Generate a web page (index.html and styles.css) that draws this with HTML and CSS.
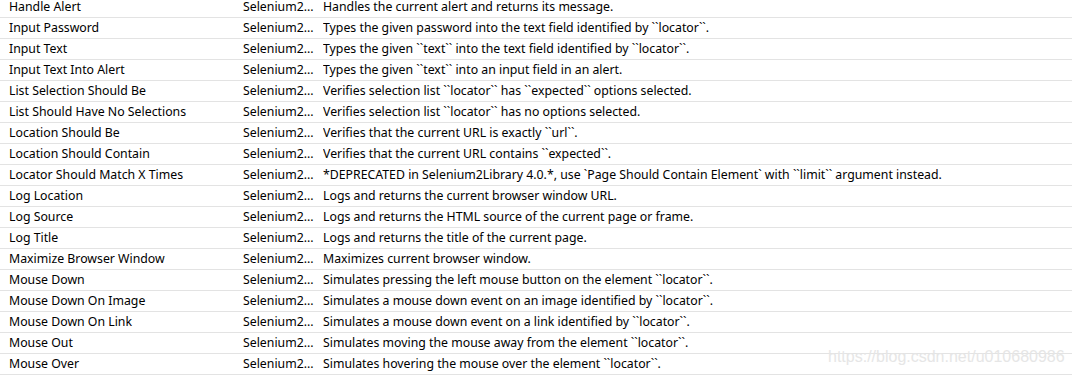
FILE: index.html
```html
<!DOCTYPE html>
<html>
<head>
<meta charset="utf-8">
<link rel="stylesheet" href="styles.css">
</head>
<body>
<div class="list">
  <div class="row"><span class="name">Handle Alert</span><span class="lib">Selenium2...</span><span class="doc">Handles the current alert and returns its message.</span></div>
  <div class="row"><span class="name">Input Password</span><span class="lib">Selenium2...</span><span class="doc">Types the given password into the text field identified by ``locator``.</span></div>
  <div class="row"><span class="name">Input Text</span><span class="lib">Selenium2...</span><span class="doc">Types the given ``text`` into the text field identified by ``locator``.</span></div>
  <div class="row"><span class="name">Input Text Into Alert</span><span class="lib">Selenium2...</span><span class="doc">Types the given ``text`` into an input field in an alert.</span></div>
  <div class="row"><span class="name">List Selection Should Be</span><span class="lib">Selenium2...</span><span class="doc">Verifies selection list ``locator`` has ``expected`` options selected.</span></div>
  <div class="row"><span class="name">List Should Have No Selections</span><span class="lib">Selenium2...</span><span class="doc">Verifies selection list ``locator`` has no options selected.</span></div>
  <div class="row"><span class="name">Location Should Be</span><span class="lib">Selenium2...</span><span class="doc">Verifies that the current URL is exactly ``url``.</span></div>
  <div class="row"><span class="name">Location Should Contain</span><span class="lib">Selenium2...</span><span class="doc">Verifies that the current URL contains ``expected``.</span></div>
  <div class="row"><span class="name">Locator Should Match X Times</span><span class="lib">Selenium2...</span><span class="doc">*DEPRECATED in Selenium2Library 4.0.*, use `Page Should Contain Element` with ``limit`` argument instead.</span></div>
  <div class="row"><span class="name">Log Location</span><span class="lib">Selenium2...</span><span class="doc">Logs and returns the current browser window URL.</span></div>
  <div class="row"><span class="name">Log Source</span><span class="lib">Selenium2...</span><span class="doc">Logs and returns the HTML source of the current page or frame.</span></div>
  <div class="row"><span class="name">Log Title</span><span class="lib">Selenium2...</span><span class="doc">Logs and returns the title of the current page.</span></div>
  <div class="row"><span class="name">Maximize Browser Window</span><span class="lib">Selenium2...</span><span class="doc">Maximizes current browser window.</span></div>
  <div class="row"><span class="name">Mouse Down</span><span class="lib">Selenium2...</span><span class="doc">Simulates pressing the left mouse button on the element ``locator``.</span></div>
  <div class="row"><span class="name">Mouse Down On Image</span><span class="lib">Selenium2...</span><span class="doc">Simulates a mouse down event on an image identified by ``locator``.</span></div>
  <div class="row"><span class="name">Mouse Down On Link</span><span class="lib">Selenium2...</span><span class="doc">Simulates a mouse down event on a link identified by ``locator``.</span></div>
  <div class="row"><span class="name">Mouse Out</span><span class="lib">Selenium2...</span><span class="doc">Simulates moving the mouse away from the element ``locator``.</span></div>
  <div class="row"><span class="name">Mouse Over</span><span class="lib">Selenium2...</span><span class="doc">Simulates hovering the mouse over the element ``locator``.</span></div>
</div>
<div class="watermark">https://blog.csdn.net/u010680986</div>
</body>
</html>
```
FILE: styles.css
```css
html, body {
  margin: 0;
  padding: 0;
  background: #ffffff;
  overflow: hidden;
}
body {
  position: relative;
  width: 1072px;
  height: 375px;
  font-family: "Noto Sans", "Noto Sans CJK SC", sans-serif;
  font-size: 12.3px;
  color: #000000;
}
.list {
  margin-top: -3px;
}
.row {
  display: grid;
  grid-template-columns: 243px 80px 1fr;
  height: 20px;
  line-height: 20px;
  border-bottom: 1px solid #e3e3e3;
  white-space: nowrap;
}
.name {
  padding-left: 9px;
  overflow: hidden;
}
.lib, .doc {
  overflow: hidden;
}
.watermark {
  position: absolute;
  left: 828px;
  top: 348px;
  font-family: "Liberation Sans", Arial, sans-serif;
  font-size: 16px;
  color: #e6e6e6;
  white-space: nowrap;
}
```
